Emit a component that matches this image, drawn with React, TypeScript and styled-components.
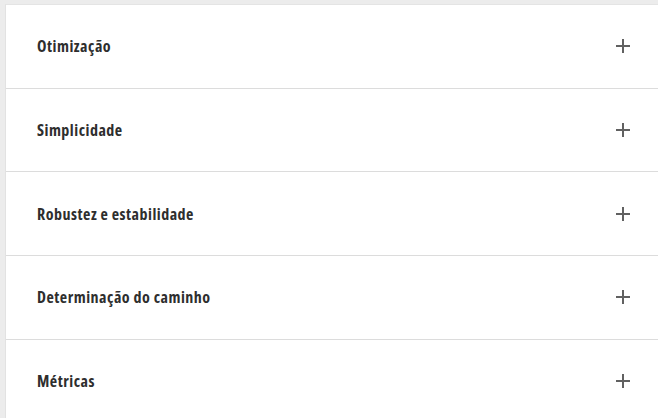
import styled, { createGlobalStyle } from 'styled-components'

const GlobalStyle = createGlobalStyle`
  html, body {
    margin: 0;
    padding: 0;
    background: #ececec;
    overflow: hidden;
  }
`

const items = [
  'Otimização',
  'Simplicidade',
  'Robustez e estabilidade',
  'Determinação do caminho',
  'Métricas',
]

const Page = styled.div`
  width: 658px;
  height: 418px;
  padding: 4px 0 0 5px;
  box-sizing: border-box;
  background: #ececec;
`

const Panel = styled.div`
  background: #fff;
  height: 100%;
  border-left: 1px solid #e2e2e2;
  border-top: 1px solid #e4e4e4;
`

const Row = styled.div`
  display: flex;
  align-items: center;
  justify-content: space-between;
  height: 82.67px;
  padding: 0 28px 0 31px;
  border-bottom: 1px solid #dcdcdc;
  cursor: pointer;
`

const Title = styled.span`
  font-family: 'Open Sans', 'Liberation Sans', sans-serif;
  font-stretch: 75%;
  font-weight: 700;
  font-size: 16px;
  letter-spacing: 0.5px;
  color: #2e2e2e;
`

const Plus = () => (
  <svg width="14" height="14" viewBox="0 0 14 14">
    <path d="M7 0v14M0 7h14" stroke="#616161" strokeWidth="2" />
  </svg>
)

export default function App() {
  return (
    <Page>
      <GlobalStyle />
      <Panel>
        {items.map((t) => (
          <Row key={t}>
            <Title>{t}</Title>
            <Plus />
          </Row>
        ))}
      </Panel>
    </Page>
  )
}
